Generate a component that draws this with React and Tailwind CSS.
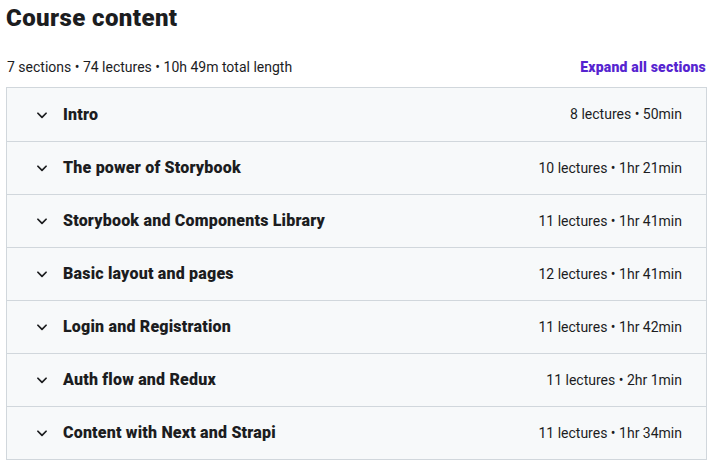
import React from 'react';

const sections = [
    { title: 'Intro', meta: '8 lectures • 50min' },
    { title: 'The power of Storybook', meta: '10 lectures • 1hr 21min' },
    { title: 'Storybook and Components Library', meta: '11 lectures • 1hr 41min' },
    { title: 'Basic layout and pages', meta: '12 lectures • 1hr 41min' },
    { title: 'Login and Registration', meta: '11 lectures • 1hr 42min' },
    { title: 'Auth flow and Redux', meta: '11 lectures • 2hr 1min' },
    { title: 'Content with Next and Strapi', meta: '11 lectures • 1hr 34min' },
];

function Chevron() {
    return (
        <svg width="14" height="14" viewBox="0 0 24 24" fill="none" stroke="#1c1d1f" strokeWidth="3" strokeLinecap="round" strokeLinejoin="round">
            <path d="M5 9l7 7 7-7" />
        </svg>
    );
}

export default function App() {
    return (
        <div className="w-[710px] h-[463px] bg-white text-[#1c1d1f] overflow-hidden" style={{ fontFamily: 'Roboto, "Liberation Sans", sans-serif' }}>
            <div className="pl-[6px] pr-[4px]">
                <h2 className="text-[24px] leading-[36px] font-black tracking-[0.4px]">Course content</h2>
                <div className="flex items-end justify-between mt-[21px] pb-[10px]">
                    <span className="text-[14px] leading-[20px] pl-[1px]">7 sections • 74 lectures • 10h 49m total length</span>
                    <button className="text-[14px] leading-[20px] font-black tracking-[0.2px] text-[#5624d0]">Expand all sections</button>
                </div>
                <div className="border border-[#d1d7dc] w-[701px]">
                    {sections.map((s, i) => (
                        <div key={s.title} className={`flex items-center justify-between h-[53px] bg-[#f7f9fa] pl-[28px] pr-[24px] ${i > 0 ? 'border-t border-[#d1d7dc]' : ''}`}>
                            <div className="flex items-center gap-[14px]">
                                <Chevron />
                                <span className="text-[16px] font-black tracking-[0.2px]">{s.title}</span>
                            </div>
                            <span className="text-[14px]">{s.meta}</span>
                        </div>
                    ))}
                </div>
            </div>
        </div>
    );
}
